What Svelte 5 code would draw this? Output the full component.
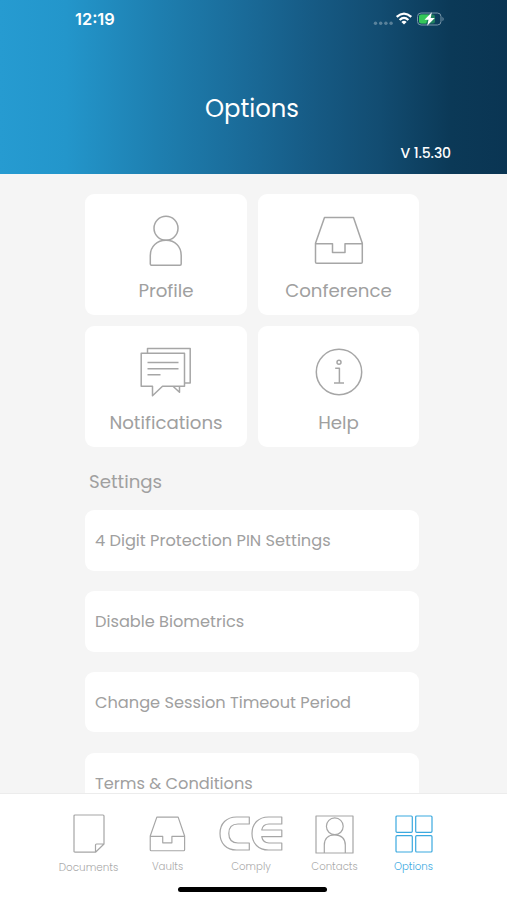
<script lang="ts">
	type IconName = 'profile' | 'tray' | 'messages' | 'info' | 'document' | 'ce' | 'contact' | 'grid';

	const tiles: { label: string; icon: IconName }[] = [
		{ label: 'Profile', icon: 'profile' },
		{ label: 'Conference', icon: 'tray' },
		{ label: 'Notifications', icon: 'messages' },
		{ label: 'Help', icon: 'info' }
	];

	const settings = [
		'4 Digit Protection PIN Settings',
		'Disable Biometrics',
		'Change Session Timeout Period',
		'Terms & Conditions'
	];

	const tabs: { label: string; icon: IconName; active?: boolean }[] = [
		{ label: 'Documents', icon: 'document' },
		{ label: 'Vaults', icon: 'tray' },
		{ label: 'Comply', icon: 'ce' },
		{ label: 'Contacts', icon: 'contact' },
		{ label: 'Options', icon: 'grid', active: true }
	];
</script>

{#snippet icon(name: IconName)}
	{#if name === 'profile'}
		<svg class="icon profile" viewBox="0 0 34 52">
			<circle cx="17" cy="13.2" r="12" />
			<path d="M1.3 49V40.5C1.3 31.5 8 25.3 17 25.3S32.2 31.5 32.2 40.5V49Q32.2 50.2 31 50.2H2.5Q1.3 50.2 1.3 49Z" />
		</svg>
	{:else if name === 'tray'}
		<svg class="icon tray" viewBox="0 0 50 49">
			<path d="M1.5 27.3 10.5 1.5H39.5L48.3 27.3V46Q48.3 47.3 47 47.3H2.8Q1.5 47.3 1.5 46ZM1.5 27.8H18.5V36.5H31V27.8H48.3" />
		</svg>
	{:else if name === 'messages'}
		<svg class="icon messages" viewBox="0 0 52 50">
			<path d="M7.5 6V1.5H50.2V36H44.5M1.2 6.2H44.5V39.2H22.5L12.5 48.7V39.2H1.2ZM33 39.2 39.5 45.2V39.2M7.5 15.5H38.5M7.5 21.7H38.5M7.5 27.7H20.5" />
		</svg>
	{:else if name === 'info'}
		<svg class="icon info" viewBox="0 0 48 48">
			<circle cx="24" cy="24" r="22.7" />
			<circle cx="24" cy="14.2" r="2" />
			<path d="M20.2 20.3H24.4V34.9M19 35H29" />
		</svg>
	{:else if name === 'document'}
		<svg class="icon document" viewBox="0 0 32 39">
			<path d="M2 1H30Q31 1 31 2V30L22.5 38.2H2Q1 38.2 1 37.2V2Q1 1 2 1ZM22.5 38.2V31Q22.5 30 23.5 30H31" />
		</svg>
	{:else if name === 'ce'}
		<svg class="icon ce" viewBox="0 0 64 35">
			<path d="M30.3 1V8H19C13 8 9.8 11.5 9.8 17.5S13 27 19 27H30.3V34H17.5C7.5 34 1 27.5 1 17.5S7.5 1 17.5 1ZM62.8 1V8H50C46 8 43.5 10 42.7 14H62.8V20.7H42.7C43.5 25 46 27 50 27H62.8V34H49.5C39.5 34 33 27.5 33 17.5S39.5 1 49.5 1Z" />
		</svg>
	{:else if name === 'contact'}
		<svg class="icon contact" viewBox="0 0 39 39">
			<path d="M1 1H38V38H1ZM9.3 38V30C9.3 23.5 13.5 19.8 19.8 19.8S30.3 23.5 30.3 30V38" />
			<circle cx="19.8" cy="11.3" r="8.4" />
		</svg>
	{:else}
		<svg class="icon grid" viewBox="0 0 38 38">
			<rect x="1" y="1" width="16.3" height="16.3" rx="1" />
			<rect x="20.7" y="1" width="16.3" height="16.3" rx="1" />
			<rect x="1" y="20.7" width="16.3" height="16.3" rx="1" />
			<rect x="20.7" y="20.7" width="16.3" height="16.3" rx="1" />
		</svg>
	{/if}
{/snippet}

<div class="screen">
	<header>
		<div class="status-bar">
			<span class="time">12:19</span>
			<svg class="status-icons" viewBox="0 0 74 18">
				<g fill="#fff" opacity="0.3">
					<circle cx="3.5" cy="13.2" r="1.7" />
					<circle cx="8.7" cy="13.2" r="1.7" />
					<circle cx="13.9" cy="13.2" r="1.7" />
					<circle cx="19.1" cy="13.2" r="1.7" />
				</g>
				<g fill="none" stroke="#fff" stroke-width="2.2">
					<path d="M24.7 6.9Q32 .3 39.3 6.9" />
					<path d="M27.6 10Q32 5.9 36.4 10" />
				</g>
				<path fill="#fff" d="M29.4 11.9Q32 9.8 34.6 11.9L32 14.6Z" />
				<rect x="45.5" y="3" width="23.5" height="12" rx="3.6" fill="none" stroke="#7996aa" stroke-width="1" />
				<path fill="#7996aa" d="M70.5 6.7Q72.8 9 70.5 11.3Z" />
				<rect x="47" y="4.5" width="16" height="9" rx="2" fill="#1f7f5e" />
				<path fill="#35c759" d="M49.3 4.5H57L54 13.5H49.3Q47 13.5 47 11.3V6.7Q47 4.5 49.3 4.5Z" />
				<path fill="#fff" d="M59.8 2.3 52.5 9.8H56.5L55.2 15.8 62.8 8H58.7Z" />
			</svg>
		</div>
		<h1>Options</h1>
		<span class="version">V 1.5.30</span>
	</header>

	<main>
		<div class="tiles">
			{#each tiles as tile}
				<div class="tile">
					{@render icon(tile.icon)}
					<span>{tile.label}</span>
				</div>
			{/each}
		</div>

		<h2>Settings</h2>

		<div class="settings">
			{#each settings as label}
				<div class="row">{label}</div>
			{/each}
		</div>
	</main>

	<footer>
		<nav>
			{#each tabs as tab}
				<div class="tab" class:active={tab.active} class:low={tab.icon === 'document'}>
					<div class="tab-icon">{@render icon(tab.icon)}</div>
					<span>{tab.label}</span>
				</div>
			{/each}
		</nav>
		<div class="home-indicator"></div>
	</footer>
</div>

<style>
	:global(body) {
		margin: 0;
	}

	.screen {
		display: flex;
		flex-direction: column;
		width: 507px;
		height: 900px;
		overflow: hidden;
		background: #f5f5f5;
		color: #a0a0a0;
		font-family: Poppins, Inter, 'Open Sans', sans-serif;
	}

	/* --- Header --- */
	header {
		display: flex;
		flex-direction: column;
		flex: none;
		box-sizing: border-box;
		height: 174px;
		background: linear-gradient(90deg, #269bd1 0%, #2396cb 13%, #1e7fb0 31%, #1a6b99 48%, #165a84 62%, #124c71 75%, #0b3957 89%, #0a3553 100%);
		color: #fff;
	}

	.status-bar {
		display: flex;
		justify-content: space-between;
		align-items: center;
		height: 38px;
		padding: 0 61px 0 75px;
	}

	.time {
		font-family: Inter, sans-serif;
		font-size: 16.4px;
		font-weight: 600;
	}

	.status-icons {
		width: 74px;
		height: 18px;
	}

	h1 {
		margin: 54px 0 0;
		padding-right: 3px;
		font-size: 24.3px;
		font-weight: 400;
		line-height: 34px;
		text-align: center;
	}

	.version {
		align-self: flex-end;
		margin: 17px 56px 0 0;
		font-size: 14px;
		font-weight: 500;
		line-height: 20px;
		letter-spacing: -0.1px;
	}

	/* --- Content --- */
	main {
		flex: 1;
		min-height: 0;
		padding: 20px 88px 0 85px;
		overflow: hidden;
	}

	.tiles {
		display: grid;
		grid-template-columns: 162px 161px;
		gap: 11px;
	}

	.tile {
		display: flex;
		flex-direction: column;
		align-items: center;
		justify-content: space-between;
		box-sizing: border-box;
		height: 121px;
		padding: 21px 0 12px;
		border-radius: 9px;
		background: #fff;
		font-size: 18.2px;
		line-height: 24px;
	}

	.icon {
		display: block;
		fill: none;
		stroke: #a6a6a6;
		stroke-width: 1.5;
		stroke-linejoin: round;
	}

	.profile {
		width: 34px;
		height: 52px;
	}

	.tray {
		width: 50px;
		height: 49px;
	}

	.tile .tray,
	.tile .info {
		margin-top: 1px;
	}

	.messages {
		width: 52px;
		height: 50px;
	}

	.info {
		width: 48px;
		height: 48px;
	}

	h2 {
		margin: 22px 0 0 4px;
		font-size: 18.2px;
		font-weight: 400;
		line-height: 26px;
	}

	.settings {
		display: flex;
		flex-direction: column;
		gap: 20.2px;
		margin-top: 15px;
	}

	.row {
		flex: none;
		box-sizing: border-box;
		height: 60.7px;
		padding-left: 10px;
		border-radius: 9px;
		background: #fff;
		font-size: 16.2px;
		line-height: 62px;
	}

	/* --- Tab bar --- */
	footer {
		flex: none;
		box-sizing: border-box;
		height: 107px;
		border-top: 1px solid #ececec;
		background: #fff;
	}

	nav {
		display: grid;
		grid-template-columns: 83px 75px 92px 75px 83px;
		height: 93px;
		padding-left: 47px;
	}

	.tab {
		display: flex;
		flex-direction: column;
		align-items: center;
		padding-top: 20px;
		color: #aaa;
		font-size: 10.2px;
		font-weight: 300;
		line-height: 14px;
	}

	.tab.low {
		padding-top: 19px;
		font-size: 10.4px;
	}

	.tab.low span {
		padding-top: 2px;
	}

	.tab-icon {
		display: flex;
		align-items: center;
		height: 40px;
		margin-bottom: 6px;
	}

	.tab .icon {
		stroke-width: 1.2;
	}

	.tab .tray {
		width: 37px;
		height: 36px;
		stroke-width: 1.6;
	}

	.document {
		width: 32px;
		height: 39px;
	}

	.ce {
		width: 64px;
		height: 35px;
		margin-bottom: 2px;
	}

	.contact {
		width: 39px;
		height: 39px;
	}

	.grid {
		width: 38px;
		height: 38px;
	}

	.tab.active {
		color: #3ba9df;
	}

	.tab.active .icon {
		stroke: #3ba9df;
	}

	.home-indicator {
		width: 149px;
		height: 5px;
		margin-left: 178px;
		border-radius: 3px;
		background: #000;
	}
</style>
